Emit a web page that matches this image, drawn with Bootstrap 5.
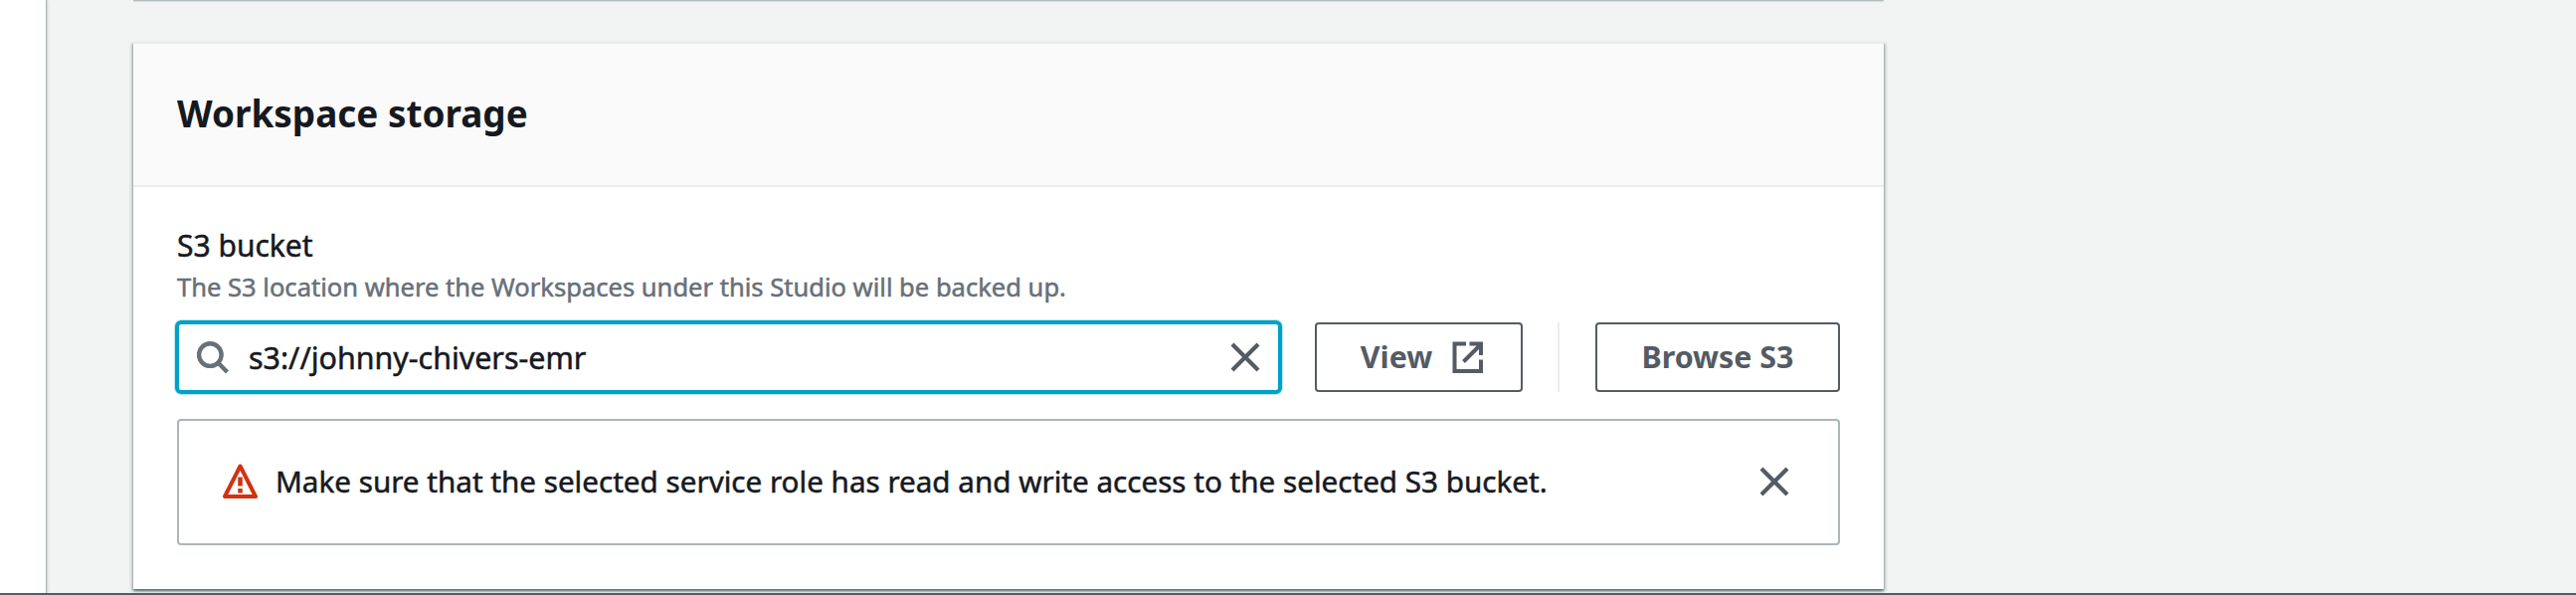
<!DOCTYPE html>
<html lang="en">
<head>
<meta charset="utf-8">
<title>Workspace storage</title>
<link href="https://cdn.jsdelivr.net/npm/bootstrap@5.3.0/dist/css/bootstrap.min.css" rel="stylesheet">
<style>
body{font-family:"Noto Sans",sans-serif;color:#16191f;background:#f2f3f3;height:598px;overflow:hidden}
.shell{height:596px;overflow:hidden}
.side-strip{width:46px;background:#fff;box-shadow:1px 0 1px #aab7b8,1px 0 4px rgba(0,28,36,.22);flex:none}
.content-col{width:1760px;margin-left:88px;flex:none}
.panel{border:0;border-radius:0;background:#fff;box-shadow:0 2px 2px rgba(0,28,36,.42),2px 2px 3px rgba(0,28,36,.2),-2px 2px 3px rgba(0,28,36,.2)}
.panel-prev{height:1px;margin-bottom:41px;background:#b3bcbf;box-shadow:0 1px 1px rgba(0,28,36,.12)}
.panel-main{height:550px;border-top:2px solid #eaeded}
.panel-head{height:144px;background:#fafafa;border-bottom:2px solid #eaeded;padding:48px 44px 0;border-radius:0!important}
.panel-head h2{font-size:36.9px;line-height:44px}
.panel-content{padding:38px 44px 0}
.field-label{font-size:30px;line-height:41px;height:40px}
.field-hint{font-size:25.55px;line-height:44px;color:#687078;margin-bottom:12px}
.text-strong{-webkit-text-stroke:.5px currentColor}
.bucket-row{height:74px}
.bucket-box{width:1113px;height:74px;margin-left:-2px;border:4px solid #00a1c9;border-radius:6px;padding:0 18px;box-shadow:0 0 0 1px rgba(0,161,201,.25)}
.bucket-box input{font-size:30.4px;line-height:40px;height:60px;color:#16191f;margin-left:20px;padding:1px 0 0!important}
.bucket-box input:focus{box-shadow:none}
.btn-outline-slate{height:70px;border:2px solid #545b64;border-radius:4px;color:#545b64;background:#fff;font-weight:700;font-size:30.4px;line-height:40px;padding:0}
.btn-view{width:209px;margin-left:33px;padding-left:7px;gap:20px}
.btn-browse{width:246px;margin-left:36px}
.split-line{width:2px;height:70px;background:#eaeded;margin-left:35px}
.notice{height:127px;margin-top:25px;border:2px solid #aab7b8;border-radius:4px;padding:0 49px 1px 44px}
.notice-text{font-size:29.63px;line-height:40px;margin-left:17px}
.bottom-bar{height:2px;background:#545b64}
svg{display:block;flex:none}
</style>
</head>
<body>
<div class="shell d-flex">
  <aside class="side-strip"></aside>
  <main class="content-col">
    <div class="panel panel-prev"></div>
    <section class="card panel panel-main">
      <div class="card-header panel-head"><h2 class="fw-bold mb-0">Workspace storage</h2></div>
      <div class="card-body panel-content">
        <label class="field-label text-strong d-block" for="bucket">S3 bucket</label>
        <div class="field-hint text-strong">The S3 location where the Workspaces under this Studio will be backed up.</div>
        <div class="bucket-row d-flex align-items-center">
          <div class="bucket-box d-flex align-items-center flex-shrink-0">
            <svg width="32" height="34" viewBox="0 0 32 34" fill="none" stroke="#687078" stroke-width="4.400"><circle cx="13.3" cy="14.6" r="11.3"/><path d="M21 22.300 30.500 32"/></svg>
            <input id="bucket" class="form-control border-0 bg-transparent text-strong" type="text" value="s3://johnny-chivers-emr">
            <svg width="30" height="30" viewBox="0 0 30 30" fill="none" stroke="#545b64" stroke-width="4.200"><path d="M2 2 28 28M28 2 2 28"/></svg>
          </div>
          <button class="btn btn-outline-slate btn-view d-flex align-items-center justify-content-center flex-shrink-0" type="button">View
            <svg width="32" height="32" viewBox="0 0 32 32" fill="none" stroke="#545b64" stroke-width="4"><path d="M14 2.500H2.500V30H29V18.500M17.500 2.500H29V14M29 3 11.500 20.500"/></svg>
          </button>
          <div class="split-line"></div>
          <button class="btn btn-outline-slate btn-browse flex-shrink-0" type="button">Browse S3</button>
        </div>
        <div class="notice d-flex align-items-center" role="alert">
          <svg width="36" height="36" viewBox="0 0 36 36" fill="none" stroke="#d13212" stroke-width="4" stroke-linejoin="round"><path d="M17.500 2.500 33 33H2Z"/><path d="M17.500 13.500V22.500M17.500 25V29.500" stroke-width="4.500"/></svg>
          <span class="notice-text text-strong text-nowrap">Make sure that the selected service role has read and write access to the selected S3 bucket.</span>
          <svg class="ms-auto" width="30" height="30" viewBox="0 0 30 30" fill="none" stroke="#545b64" stroke-width="4.200"><path d="M2 2 28 28M28 2 2 28"/></svg>
        </div>
      </div>
    </section>
  </main>
</div>
<div class="bottom-bar"></div>
<script src="https://cdn.jsdelivr.net/npm/bootstrap@5.3.0/dist/js/bootstrap.bundle.min.js"></script>
</body>
</html>
